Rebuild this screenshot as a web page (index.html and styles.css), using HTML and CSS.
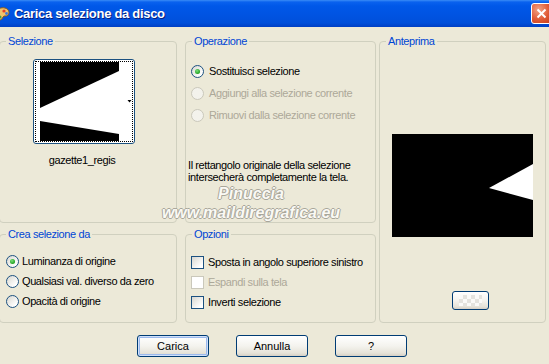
FILE: index.html
```html
<!DOCTYPE html>
<html>
<head>
  <title>Carica selezione da disco</title>
  <link rel="stylesheet" href="styles.css">
</head>
<body>
  <div class="titlebar">
    <svg class="app-icon" width="16" height="16" viewBox="0 0 16 16">
      <path d="M2 8 C2 3 7 1 11 2 C15 3 16 7 14 9 C12 11 10 9 9 11 C8 14 5 15 3 13 C2 12 2 10 2 8 Z" fill="#f0c36a" stroke="#8a5a1c" stroke-width="1"/>
      <circle cx="10" cy="5" r="1.6" fill="#e0402a"/>
      <circle cx="12.5" cy="7.5" r="1.4" fill="#3a7ae0"/>
      <circle cx="6" cy="11" r="1.5" fill="#40a040"/>
    </svg>
    <span class="title">Carica selezione da disco</span>
    <button class="close">
      <svg width="11" height="11" viewBox="0 0 11 11"><path d="M1.5 1.5 L9.5 9.5 M9.5 1.5 L1.5 9.5" stroke="#fff" stroke-width="2"/></svg>
    </button>
  </div>

  <div class="client">
    <div class="groups">
      <fieldset class="grp sel">
        <legend>Selezione</legend>
        <div class="gbody">
          <div class="thumb">
            <div class="focus">
              <svg width="96" height="79" viewBox="0 0 96 79">
                <rect x="0" y="0" width="96" height="79" fill="#fff"/>
                <rect x="4" y="0" width="79" height="79" fill="#000"/>
                <polygon points="4,46 83,9 83,72 4,59" fill="#fff"/>
                <polygon points="91.5,38 95.5,38 93.5,40.5" fill="#000"/>
              </svg>
            </div>
          </div>
          <div class="thumb-name">gazette1_regis</div>
        </div>
      </fieldset>

      <fieldset class="grp op">
        <legend>Operazione</legend>
        <div class="gbody">
          <label class="opt"><span class="radio on"></span>Sostituisci selezione</label>
          <label class="opt off"><span class="radio"></span>Aggiungi alla selezione corrente</label>
          <label class="opt off"><span class="radio"></span>Rimuovi dalla selezione corrente</label>
          <p class="note">Il rettangolo originale della selezione<br>intersecherà completamente la tela.</p>
        </div>
      </fieldset>

      <fieldset class="grp prev">
        <legend>Anteprima</legend>
        <div class="gbody">
          <svg class="prev-img" width="141" height="103" viewBox="0 0 141 103">
            <rect width="141" height="103" fill="#000"/>
            <polygon points="97,54 141,30 141,66" fill="#fff"/>
          </svg>
          <button class="swatch"><span class="checker"></span></button>
        </div>
      </fieldset>

      <fieldset class="grp crea">
        <legend>Crea selezione da</legend>
        <div class="gbody">
          <label class="opt"><span class="radio on"></span>Luminanza di origine</label>
          <label class="opt"><span class="radio"></span>Qualsiasi val. diverso da zero</label>
          <label class="opt"><span class="radio"></span>Opacità di origine</label>
        </div>
      </fieldset>

      <fieldset class="grp opz">
        <legend>Opzioni</legend>
        <div class="gbody">
          <label class="opt"><span class="chk"></span>Sposta in angolo superiore sinistro</label>
          <label class="opt off"><span class="chk"></span>Espandi sulla tela</label>
          <label class="opt"><span class="chk"></span>Inverti selezione</label>
        </div>
      </fieldset>
    </div>

    <div class="actions">
      <button class="btn default">Carica</button>
      <button class="btn">Annulla</button>
      <button class="btn">?</button>
    </div>
  </div>

  <div class="watermark">
    <div>Pinuccia</div>
    <div>www.maildiregrafica.eu</div>
  </div>
</body>
</html>
```

FILE: styles.css
```css
body {
  margin: 0; width: 549px; height: 364px;
  overflow: hidden; position: relative;
  background: #ECE9D8; color: #000;
  font: 11px/13px "Liberation Sans", Arial, sans-serif;
  letter-spacing: -0.4px;
}
.titlebar {
  height: 27px; display: flex; align-items: center;
  background: linear-gradient(#3A8CF6 0, #0A62EE 2px, #0058E8 6px, #0054E3 50%, #004FDA 85%, #003FC4 100%);
}
.app-icon {
  margin-left: -6px; flex: none;
}
.title {
  margin-left: 4px; color: #fff;
  font: bold 13px "Liberation Sans", Arial, sans-serif;
  letter-spacing: -0.3px;
  text-shadow: 1px 1px 0 #0A1E7A;
}
.close {
  margin-left: auto; margin-right: -3px;
  width: 21px; height: 21px; padding: 0;
  border: 1px solid #fff; border-radius: 3px;
  background: radial-gradient(circle at 35% 30%, #F2A386, #E05A36 55%, #C43C1C);
  display: flex; align-items: center; justify-content: center;
}

.client {
  padding-top: 8px;
}
.groups {
  display: grid; margin-left: -1px;
  grid-template-columns: 178px 8px 191px 3px 167px;
  grid-template-rows: 188px 95px; row-gap: 5px;
  grid-template-areas:
    "sel . op . prev"
    "crea . opz . prev";
}
.grp {
  margin: 0; padding: 0; min-width: 0;
  border: 1px solid #D0D0BF; border-radius: 4px;
}
.grp legend {
  color: #0046D5; padding: 0 2px; margin-left: 6px;
  line-height: 13px;
}

.sel { grid-area: sel; }
.sel .gbody { padding: 11px 0 0 33px; }
.thumb {
  width: 102px; height: 85px; box-sizing: border-box;
  border: 1px solid #1C5180; border-radius: 3px;
  background: #fff; padding: 1px;
}
.focus {
  height: 100%; box-sizing: border-box;
  border: 1px dotted #000;
}
.focus svg { display: block; }
.thumb-name {
  width: 98px; margin-top: 10px; text-align: center;
}

.op { grid-area: op; }
.op .gbody { padding: 12px 0 0 2px; }
.opt {
  display: flex; align-items: center; height: 22px;
  gap: 5px; padding-left: 3px;
}
.off { color: #ACA899; }
.note {
  margin: 33px 0 0; line-height: 12px;
}

.prev { grid-area: prev; }
.prev .gbody { padding: 86px 0 0 12px; }
.prev-img { display: block; }
.swatch {
  display: block; margin: 54px 0 0 60px;
  width: 37px; height: 19px; padding: 3px 6px;
  border: 1px solid #003C74; border-radius: 3px;
  background: linear-gradient(#FFFFFF, #F4F3EE 50%, #E6E3D9 85%, #D6D0C5);
}
.checker {
  display: block; width: 100%; height: 100%;
  background: repeating-conic-gradient(#E4E3DE 0 25%, #FAFAF8 0 50%) 0 0 / 8px 8px;
}

.crea { grid-area: crea; }
.crea .gbody { padding: 10px 0 0 6px; }
.crea .opt { height: 20px; gap: 3px; padding-left: 0; }

.opz { grid-area: opz; }
.opz .gbody { padding: 11px 0 0 5px; }
.opz .opt { height: 20px; gap: 4px; padding-left: 0; }

.radio {
  flex: none; width: 13px; height: 13px; box-sizing: border-box;
  border: 1px solid #1C5180; border-radius: 50%;
  background: linear-gradient(135deg, #D8D7D0, #FFFFFF 80%);
  display: flex; align-items: center; justify-content: center;
}
.radio.on::after {
  content: ""; width: 5px; height: 5px; border-radius: 50%;
  background: radial-gradient(circle at 40% 35%, #7BE07B, #21A121 70%);
}
.off .radio {
  border-color: #CAC8BB; background: #F3F2EC;
}
.chk {
  flex: none; width: 13px; height: 13px; box-sizing: border-box;
  border: 1px solid #1C5180;
  background: linear-gradient(135deg, #D8D7D0, #FFFFFF 80%);
}
.off .chk {
  border-color: #CAC8BB; background: #FFFFFF;
}

.actions {
  display: flex; justify-content: center; gap: 27px;
  margin-top: 12px; padding-right: 5px;
}
.btn {
  width: 72px; height: 22px; padding: 0;
  border: 1px solid #003C74; border-radius: 3px;
  background: linear-gradient(#FFFFFF, #F4F3EE 50%, #E6E3D9 85%, #D6D0C5);
  font: 11px "Liberation Sans", Arial, sans-serif;
  color: #000;
}
.btn.default {
  box-shadow: inset 0 0 0 1px #CFE0FA, inset 0 0 0 2px #9CB9EC;
}

.watermark {
  position: absolute; left: 150px; top: 184px; width: 202px;
  text-align: center;
  font: italic bold 16px/19px "Liberation Sans", Arial, sans-serif;
  letter-spacing: 0;
  color: #FAF9F4;
  text-shadow: 1px 0 0 #A8A69A, -1px 0 0 #A8A69A, 0 1px 0 #A8A69A, 0 -1px 0 #A8A69A;
}
```
